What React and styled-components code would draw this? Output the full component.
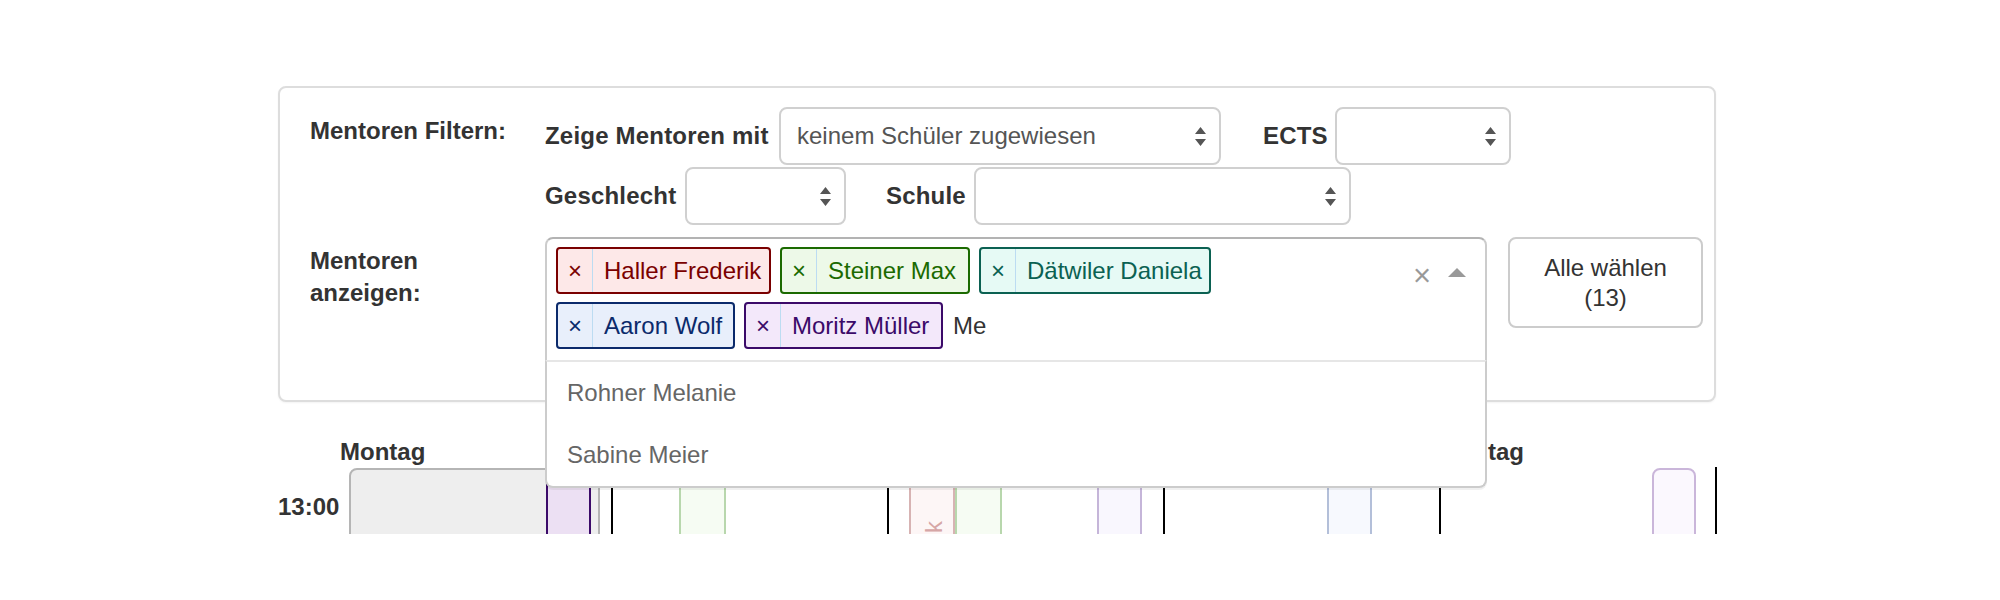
import React from "react";
import styled, { createGlobalStyle } from "styled-components";

const GlobalStyle = createGlobalStyle`
  html, body { margin: 0; padding: 0; background: #fff; }
  body {
    font-family: "Liberation Sans", Arial, Helvetica, sans-serif;
    font-size: 24px;
    color: #333;
  }
  * { box-sizing: border-box; }
`;

const Page = styled.div`
  padding: 86px 0 0 278px;
  width: 1760px;
  height: 534px;
  overflow: hidden;
`;

const Panel = styled.div`
  position: relative;
  z-index: 2;
  width: 1438px;
  background: #fff;
  border: 2px solid #dddddd;
  border-radius: 8px;
  box-shadow: 0 1px 2px rgba(0, 0, 0, 0.05);
  padding: 19px 10px 40px 30px;
  display: grid;
  grid-template-columns: 235px 1fr;
  row-gap: 12px;
`;

const SectionLabel = styled.div`
  font-weight: bold;
  line-height: 32px;
  padding: 8px 25px 0 0;
`;

const FilterLines = styled.div`
  display: flex;
  flex-direction: column;
  gap: 2px;
`;

const Line = styled.div`
  display: flex;
  align-items: center;
`;

const InlineLabel = styled.label`
  flex: none;
  width: ${(p) => p.$w}px;
  margin-left: ${(p) => p.$ml || 0}px;
  font-weight: bold;
  line-height: 34px;
  letter-spacing: 0.2px;
`;

const SelectBox = styled.div`
  flex: none;
  width: ${(p) => p.$w}px;
  height: 58px;
  display: flex;
  align-items: center;
  padding: 0 13px 0 16px;
  border: 2px solid #d0d0d0;
  border-radius: 8px;
  background: #fff;
  color: #555;
  line-height: 34px;
`;

const SelectValue = styled.span`
  flex: 1;
  white-space: nowrap;
`;

const Arrows = styled.svg`
  flex: none;
`;

const SortArrows = () => (
  <Arrows width="11" height="19" viewBox="0 0 11 19">
    <path d="M5.5 0 L11 7 L0 7 Z M0 12 L11 12 L5.5 19 Z" fill="#555" />
  </Arrows>
);

const MentorRow = styled.div`
  display: flex;
  align-items: flex-start;
`;

const Multi = styled.div`
  position: relative;
  flex: none;
  width: 942px;
`;

const Control = styled.div`
  display: flex;
  align-items: flex-start;
  height: 123px;
  background: #fff;
  border: 2px solid #cccccc;
  border-top-color: #b3b3b3;
  border-bottom: none;
  border-radius: 8px 8px 0 0;
`;

const ValueArea = styled.div`
  flex: 1;
  display: flex;
  flex-wrap: wrap;
  align-items: center;
  gap: 8px 9px;
  padding: 8px 60px 0 9px;
`;

const Tag = styled.div`
  flex: none;
  display: flex;
  align-items: stretch;
  width: ${(p) => p.$w}px;
  height: 47px;
  border: 2px solid ${(p) => p.$c};
  border-radius: 4px;
  background: ${(p) => p.$bg};
  color: ${(p) => p.$c};
`;

const TagRemove = styled.span`
  flex: none;
  width: 35px;
  display: flex;
  align-items: center;
  justify-content: center;
  border-right: 1px solid #bcdcf2;
  line-height: 1;
`;

const TagLabel = styled.span`
  flex: 1;
  display: flex;
  align-items: center;
  padding: 0 6px 0 11px;
  white-space: nowrap;
`;

const SearchInput = styled.input`
  width: 80px;
  margin-left: 1px;
  padding: 0;
  border: 0;
  outline: none;
  background: transparent;
  font: inherit;
  color: #333;
  line-height: 34px;
`;

const Indicators = styled.div`
  flex: none;
  display: flex;
  align-items: center;
  height: 47px;
  margin-top: 8px;
`;

const ClearZone = styled.span`
  width: 30px;
  padding-top: 10px;
  text-align: center;
  font-size: 31px;
  line-height: 1;
  color: #999;
`;

const ArrowZone = styled.span`
  width: 40px;
  margin-right: 8px;
  padding-top: 4px;
  display: flex;
  justify-content: center;
`;

const ArrowUp = styled.span`
  width: 0;
  height: 0;
  border-style: solid;
  border-width: 0 9.5px 9px;
  border-color: transparent transparent #999;
`;

const Menu = styled.div`
  position: absolute;
  top: 100%;
  left: 0;
  right: 0;
  z-index: 10;
  background: #fff;
  border: 2px solid #cccccc;
  border-top: 2px solid #e6e6e6;
  border-radius: 0 0 8px 8px;
  box-shadow: 0 2px 0 rgba(0, 0, 0, 0.06);
`;

const Option = styled.div`
  height: 62px;
  padding: 13px 20px 0;
  line-height: 35px;
  color: #666;
`;

const AllButton = styled.button`
  flex: none;
  margin-left: 21px;
  width: 195px;
  height: 91px;
  padding: 0;
  border: 2px solid #cccccc;
  border-radius: 8px;
  background: #fff;
  font: inherit;
  line-height: 30px;
  color: #333;
  text-align: center;
`;

const Calendar = styled.div`
  margin-top: 35px;
  width: 1441px;
`;

const CalHeader = styled.div`
  display: grid;
  grid-template-columns: 59px repeat(5, 276px);
  height: 30px;
`;

const DayName = styled.div`
  font-weight: bold;
  line-height: 30px;
  padding-left: 3px;
  white-space: nowrap;
`;

const CalBody = styled.div`
  display: grid;
  grid-template-columns: 59px repeat(5, 276px);
  height: 67px;
  overflow: hidden;
`;

const TimeCell = styled.div`
  font-weight: bold;
  line-height: 34px;
  padding-top: 23px;
`;

const DayCol = styled.div`
  position: relative;
  border-right: 2px solid #000;
`;

const Event = styled.div`
  position: absolute;
  top: ${(p) => p.$top || 0}px;
  left: ${(p) => p.$left}px;
  width: ${(p) => p.$w}px;
  height: 300px;
  border: 2px solid ${(p) => p.$bc};
  border-radius: 8px 8px 0 0;
  background: ${(p) => p.$bg};
  overflow: hidden;
`;

const EventText = styled.span`
  position: absolute;
  top: 52px;
  right: 31px;
  transform: rotate(-90deg);
  transform-origin: top right;
  white-space: nowrap;
  line-height: 24px;
  color: ${(p) => p.$c};
`;

const tags = [
  { name: "Haller Frederik", c: "#7a0000", bg: "#fde8e8", w: 215 },
  { name: "Steiner Max", c: "#1b6a00", bg: "#edf9e8", w: 190 },
  { name: "Dätwiler Daniela", c: "#0b6152", bg: "#e6faf5", w: 232 },
  { name: "Aaron Wolf", c: "#0b2a6b", bg: "#e8effb", w: 179 },
  { name: "Moritz Müller", c: "#3b0a69", bg: "#f3e8fa", w: 199 },
];

const days = ["Montag", "Dienstag", "Mittwoch", "Donnerstag", "Freitag"];

const colEvents = [
  [
    { left: 12, w: 251, top: 1, bc: "#b5b5b5", bg: "#eeeeee" },
    { left: 209, w: 45, bc: "#3b0a69", bg: "#ece0f3" },
  ],
  [{ left: 66, w: 47, bc: "#b8d7ad", bg: "#f6fcf3" }],
  [
    { left: 20, w: 46, bc: "#d7b3b3", bg: "#fdf6f6", text: "Haller Frederik", tc: "#d6a6a6" },
    { left: 66, w: 47, bc: "#b8d7ad", bg: "#f6fcf3" },
    { left: 208, w: 45, bc: "#c5b5d9", bg: "#f9f7fe" },
  ],
  [{ left: 162, w: 45, bc: "#b3bfd9", bg: "#f7f9fe" }],
  [{ left: 211, w: 44, top: 1, bc: "#cab6da", bg: "#fbf8fe" }],
];

export default function App() {
  return (
    <>
      <GlobalStyle />
      <Page>
        <Panel>
          <SectionLabel>Mentoren Filtern:</SectionLabel>
          <FilterLines>
            <Line>
              <InlineLabel $w={234}>Zeige Mentoren mit</InlineLabel>
              <SelectBox $w={442}>
                <SelectValue>keinem Schüler zugewiesen</SelectValue>
                <SortArrows />
              </SelectBox>
              <InlineLabel $w={72} $ml={42}>ECTS</InlineLabel>
              <SelectBox $w={176}>
                <SelectValue />
                <SortArrows />
              </SelectBox>
            </Line>
            <Line>
              <InlineLabel $w={140}>Geschlecht</InlineLabel>
              <SelectBox $w={161}>
                <SelectValue />
                <SortArrows />
              </SelectBox>
              <InlineLabel $w={88} $ml={40}>Schule</InlineLabel>
              <SelectBox $w={377}>
                <SelectValue />
                <SortArrows />
              </SelectBox>
            </Line>
          </FilterLines>

          <SectionLabel>Mentoren anzeigen:</SectionLabel>
          <MentorRow>
            <Multi>
              <Control>
                <ValueArea>
                  {tags.map((t) => (
                    <Tag key={t.name} $c={t.c} $bg={t.bg} $w={t.w}>
                      <TagRemove>×</TagRemove>
                      <TagLabel>{t.name}</TagLabel>
                    </Tag>
                  ))}
                  <SearchInput defaultValue="Me" />
                </ValueArea>
                <Indicators>
                  <ClearZone>×</ClearZone>
                  <ArrowZone>
                    <ArrowUp />
                  </ArrowZone>
                </Indicators>
              </Control>
              <Menu>
                <Option>Rohner Melanie</Option>
                <Option>Sabine Meier</Option>
              </Menu>
            </Multi>
            <AllButton>
              Alle wählen
              <br />
              (13)
            </AllButton>
          </MentorRow>
        </Panel>

        <Calendar>
          <CalHeader>
            <div />
            {days.map((d) => (
              <DayName key={d}>{d}</DayName>
            ))}
          </CalHeader>
          <CalBody>
            <TimeCell>13:00</TimeCell>
            {colEvents.map((evs, i) => (
              <DayCol key={days[i]}>
                {evs.map((e, j) => (
                  <Event key={j} $left={e.left} $w={e.w} $top={e.top} $bc={e.bc} $bg={e.bg}>
                    {e.text && <EventText $c={e.tc}>{e.text}</EventText>}
                  </Event>
                ))}
              </DayCol>
            ))}
          </CalBody>
        </Calendar>
      </Page>
    </>
  );
}
